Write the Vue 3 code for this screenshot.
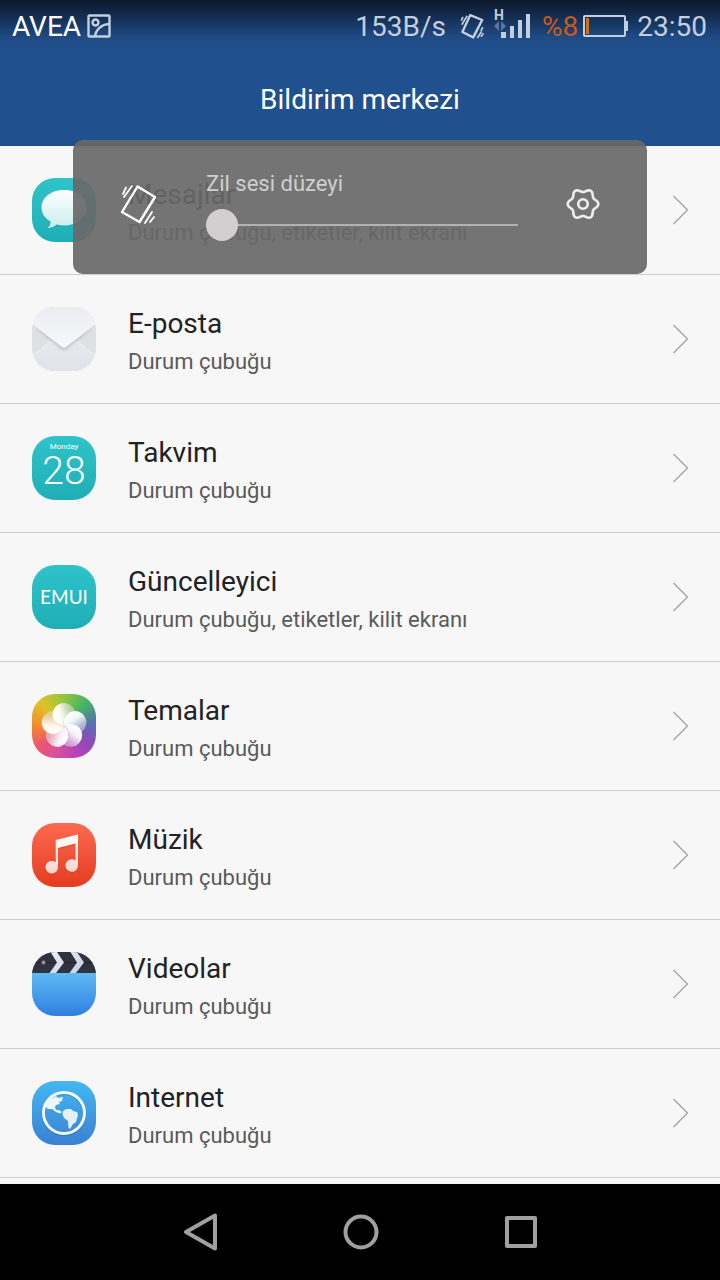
<script setup>
import { ref } from 'vue'

const level = ref(0)

const apps = [
  { id: 'messages', name: 'Mesajlar', detail: 'Durum çubuğu, etiketler, kilit ekranı' },
  { id: 'mail', name: 'E-posta', detail: 'Durum çubuğu' },
  { id: 'calendar', name: 'Takvim', detail: 'Durum çubuğu' },
  { id: 'updater', name: 'Güncelleyici', detail: 'Durum çubuğu, etiketler, kilit ekranı' },
  { id: 'themes', name: 'Temalar', detail: 'Durum çubuğu' },
  { id: 'music', name: 'Müzik', detail: 'Durum çubuğu' },
  { id: 'videos', name: 'Videolar', detail: 'Durum çubuğu' },
  { id: 'internet', name: 'Internet', detail: 'Durum çubuğu' },
]

// Six-lobed outline of the settings gear
const gearPoints = Array.from({ length: 120 }, (_, i) => {
  const a = (i / 120) * Math.PI * 2
  const r = 13.6 + 1.7 * Math.cos(6 * a)
  return `${(r * Math.cos(a)).toFixed(2)},${(r * Math.sin(a)).toFixed(2)}`
}).join(' ')
</script>

<template>
  <div class="screen">
    <header class="top">
      <div class="status">
        <span class="carrier">AVEA</span>
        <svg class="picture" width="24" height="24" viewBox="0 0 24 24" fill="none" stroke="#c3cede" stroke-width="2.4">
          <rect x="1.5" y="1.5" width="21" height="21" rx="1" />
          <circle cx="8.5" cy="8.5" r="3" />
          <path d="M8 22C9 16 14 10.500 22 10" />
        </svg>
        <span class="speed">153B/s</span>
        <svg class="ring" width="24" height="28" viewBox="0 0 40 44" fill="none" stroke="#c3cede" stroke-width="4">
          <path d="M17 4L37 12L22 41L4 32Z" stroke-linejoin="round" />
          <path d="M2 13L5 7M3 20L12 5M36 31L29 42M39 34L35 40M38 24L35 30" stroke-width="2.800" />
        </svg>
        <svg class="signal" width="38" height="40" viewBox="0 -4 38 40">
          <text x="0" y="10" class="network">H</text>
          <path d="M0 16L5 11V21ZM7 11L12 16L7 21Z" fill="#5a769f" />
          <path d="M7 22h5v6h-5zM16 16h4v12h-4zM24 10h4v18h-4zM32 4h4v24h-4z" fill="#c3cede" />
        </svg>
        <span class="percent">%8</span>
        <svg class="battery" width="46" height="24" viewBox="0 0 46 24">
          <rect x="1" y="2" width="41" height="20" rx="1" fill="none" stroke="#c3cede" stroke-width="2" />
          <rect x="43" y="7" width="2" height="10" fill="#c3cede" />
          <rect x="3" y="4" width="3" height="16" fill="#c8741a" />
        </svg>
        <span class="clock">23:50</span>
      </div>
      <h1>Bildirim merkezi</h1>
    </header>

    <main>
      <ul>
        <li v-for="app in apps" :key="app.id">
          <a href="#" class="row">
            <svg class="icon" :class="app.id" viewBox="0 0 64 64" aria-hidden="true">
              <g v-if="app.id === 'messages'">
                <defs>
                  <linearGradient id="bubble" x1="0" y1="0" x2="0" y2="1">
                    <stop offset="0" stop-color="#fff" /><stop offset="1" stop-color="#c9edee" />
                  </linearGradient>
                </defs>
                <path d="M32 13C45 13 55 20 55 30C55 41 44 48.500 32 48.500Q28 48.500 25 47.600Q20 51.500 15.500 51Q19 48 18.500 44.500C13 41.500 9.500 36.500 9.500 30C9.500 20 19 13 32 13Z" fill="#159ba2" opacity=".35" />
                <path d="M32 12C45 12 55 19.500 55 29.500C55 40 44 47.500 32 47.500Q28 47.500 25 46.600Q20 50.500 15.500 50Q19 47 18.500 43.500C13 40.500 9.500 35.500 9.500 29.500C9.500 19.500 19 12 32 12Z" fill="url(#bubble)" />
              </g>
              <g v-else-if="app.id === 'mail'">
                <defs>
                  <linearGradient id="flap" x1="0" y1="0" x2="0" y2="1">
                    <stop offset="0" stop-color="#ebecf2" /><stop offset="1" stop-color="#f7f9fb" />
                  </linearGradient>
                  <linearGradient id="pocket" x1="0" y1="0" x2="0" y2="1">
                    <stop offset="0" stop-color="#e8e9ee" /><stop offset="1" stop-color="#e2e3ea" />
                  </linearGradient>
                  <filter id="flapShade" x="-20%" y="-20%" width="140%" height="150%"><feGaussianBlur stdDeviation="1.500" /></filter>
                </defs>
                <path d="M0 49L20 33H44L64 49V64H0Z" fill="url(#pocket)" />
                <path d="M0 49L20 33M44 33L64 49" stroke="#edf0f2" />
                <path d="M4 21L30 42.500Q32 44 34 42.500L60 21Z" fill="#aab4be" opacity=".7" filter="url(#flapShade)" />
                <path d="M0 0H64V17L34 40Q32 41.500 30 40L0 17Z" fill="url(#flap)" />
              </g>
              <g v-else-if="app.id === 'calendar'" fill="#fff" text-anchor="middle">
                <text x="32" y="13" class="weekday">Monday</text>
                <text x="32" y="48" class="date">28</text>
              </g>
              <g v-else-if="app.id === 'updater'">
                <text x="32" y="39" class="emui" text-anchor="middle">EMUI</text>
              </g>
              <g v-else-if="app.id === 'themes'" transform="translate(32 32)">
                <defs>
                  <linearGradient id="petal" x1="-9" y1="-6" x2="9" y2="-12" gradientUnits="userSpaceOnUse">
                    <stop offset="0" stop-color="#fff" />
                    <stop offset=".4" stop-color="#fff" stop-opacity=".92" />
                    <stop offset="1" stop-color="#e6dce6" stop-opacity=".55" />
                  </linearGradient>
                </defs>
                <path v-for="n in 5" :key="n" d="M0 0A11.500 11.500 0 1 1 10.940 -15.050A11.500 11.500 0 0 0 0 0Z" fill="url(#petal)" :transform="`rotate(${n * 72})`" />
              </g>
              <g v-else-if="app.id === 'music'">
                <defs>
                  <linearGradient id="note" x1="0" y1="11" x2="0" y2="51" gradientUnits="userSpaceOnUse">
                    <stop offset="0" stop-color="#fff" /><stop offset="1" stop-color="#fbd3cc" />
                  </linearGradient>
                </defs>
                <path d="M23.700 17L46 11.500V43A6.300 6.300 0 1 1 43.500 37.500V20.500L26 25V45A6.300 6.300 0 1 1 23.700 39.300Z" fill="#b92c14" opacity=".4" transform="translate(0 1)" />
                <path d="M23.700 17L46 11.500V43A6.300 6.300 0 1 1 43.500 37.500V20.500L26 25V45A6.300 6.300 0 1 1 23.700 39.300Z" fill="url(#note)" />
              </g>
              <g v-else-if="app.id === 'videos'">
                <defs>
                  <linearGradient id="stripe" x1="0" y1="0" x2="1" y2="1">
                    <stop offset="0" stop-color="#e9edf8" /><stop offset="1" stop-color="#c6cfe2" />
                  </linearGradient>
                </defs>
                <path d="M0 0H64V21H0Z" fill="#32323e" />
                <path d="M0 10.500H64" stroke="#24242e" />
                <path d="M18.500 0H25L32 10.500L24 21H17.500L25 10.500ZM38.500 0H45L52 10.500L44 21H37.500L45 10.500Z" fill="url(#stripe)" />
                <circle cx="11.500" cy="10.500" r="2" fill="#92929c" />
              </g>
              <g v-else>
                <circle cx="32" cy="33" r="20.500" fill="none" stroke="#1c5ca8" stroke-opacity=".35" stroke-width="3.500" />
                <circle cx="32" cy="32" r="20.500" fill="none" stroke="#f3f9fe" stroke-width="3" />
                <path d="M13 25L17 18L21 17L24 15L26 17L31 16L30 20L27 21L28 23L24 24L23 26L24 29L27 29L30 31L28 32.500L24 31L20 28L16 28Z" fill="#eef6fd" />
                <path d="M31 30L34 28H39L41 30L45 31L46 34L44 41L41 43L38 48L36.500 47L36 40L32 37L30.500 33Z" fill="#e6f0fb" />
              </g>
            </svg>
            <span class="text">
              <span class="name">{{ app.name }}</span>
              <span class="detail">{{ app.detail }}</span>
            </span>
            <svg class="chevron" width="16" height="30" viewBox="0 0 16 30" fill="none" stroke="#a6a6a6" stroke-width="1.400">
              <path d="M1.500 1L15.500 15L1.500 29" />
            </svg>
          </a>
        </li>
      </ul>
    </main>

    <section class="volume">
      <button type="button" aria-label="Titreşim">
        <svg width="40" height="44" viewBox="2 -1 40 44" fill="none" stroke="#fff" stroke-width="2.400">
          <path d="M19.500 3.500L37 14L21.500 39L4 29Z" stroke-linejoin="round" />
          <path d="M6 8.500L8 4.500M6 14L14 3M27 40L34 29M32 39L36 34M5 11L6 9" stroke-width="1.800" stroke-linecap="round" />
        </svg>
      </button>
      <div class="level">
        <label for="ring-level">Zil sesi düzeyi</label>
        <input id="ring-level" v-model="level" type="range" min="0" max="7">
      </div>
      <button type="button" aria-label="Ayarlar">
        <svg width="36" height="36" viewBox="-18 -18 36 36" fill="none" stroke="#ececec" stroke-width="2.600" stroke-linejoin="round">
          <polygon :points="gearPoints" />
          <circle r="4.800" />
        </svg>
      </button>
    </section>

    <nav>
      <button type="button" aria-label="Geri">
        <svg width="40" height="40" viewBox="0 0 40 40"><path d="M6 20L35 3.500V36.500Z" /></svg>
      </button>
      <button type="button" aria-label="Ana ekran">
        <svg width="40" height="40" viewBox="0 0 40 40"><circle cx="21" cy="20" r="15.500" /></svg>
      </button>
      <button type="button" aria-label="Son uygulamalar">
        <svg width="40" height="40" viewBox="0 0 40 40"><rect x="7" y="6" width="28" height="28" /></svg>
      </button>
    </nav>
  </div>
</template>

<style>
body {
  margin: 0;
  background: #f7f7f7;
}
</style>

<style scoped>
.screen {
  position: relative;
  display: flex;
  flex-direction: column;
  min-height: 100vh;
  background: #f7f7f7;
  font-family: Roboto, "Noto Sans", sans-serif;
}

.top {
  background: linear-gradient(#0b192d 0, #0f213c 8px, #1f4b85 38px, #20508e 54px);
  color: #fff;
}

.status {
  display: flex;
  align-items: center;
  height: 52px;
  padding: 0 13px 0 12px;
  font-size: 28px;
  color: #c3cede;
}

.carrier {
  color: #fff;
}

.picture {
  margin-left: 6px;
}

.speed {
  margin-left: auto;
}

.ring {
  margin-left: 14px;
}

.signal {
  margin: 0 10px;
}

.network {
  font-size: 14px;
  font-weight: 700;
  fill: #c3cede;
}

.percent {
  color: #c8591b;
}

.battery {
  margin: 0 8px 0 5px;
}

h1 {
  margin: 0;
  padding-top: 2px;
  font-size: 28px;
  font-weight: 400;
  line-height: 92px;
  text-align: center;
}

main {
  flex: 1;
}

ul {
  margin: 0;
  padding: 0;
  list-style: none;
}

.row {
  display: flex;
  align-items: center;
  height: 128px;
  padding: 0 32px;
  border-bottom: 1px solid #cdcdcd;
  color: #222;
  text-decoration: none;
}

.icon {
  width: 64px;
  height: 64px;
  border-radius: 23px;
}

.messages,
.calendar,
.updater {
  background: linear-gradient(#2ec4c9, #20aeb6);
}

.mail {
  background: #dde1e4;
}

.themes {
  background: conic-gradient(#8fc63f, #45b269 45deg, #5570b4 85deg, #9248b8 125deg, #b944b8 160deg, #d8509c 195deg, #ea5573 230deg, #f38a2c 270deg, #dfc226 315deg, #8fc63f);
}

.music {
  background: linear-gradient(#fd6a4e, #e33c22);
}

.videos {
  background: linear-gradient(#5fbcf6 30%, #317fe0);
}

.internet {
  background: linear-gradient(#42b8f2, #3b80d2);
}

.weekday {
  font-size: 8px;
}

.date {
  font-size: 39px;
  font-weight: 300;
}

.emui {
  font-family: Lato, sans-serif;
  font-size: 19px;
  fill: #fff;
}

.text {
  display: flex;
  flex: 1;
  flex-direction: column;
  padding: 7px 0 0 32px;
}

.name {
  font-size: 28px;
  line-height: 38px;
}

.detail {
  font-size: 22px;
  line-height: 38px;
  color: #5a5a5a;
}

button {
  display: flex;
  align-items: center;
  justify-content: center;
  margin: 0;
  padding: 0;
  border: 0;
  background: none;
}

.volume {
  position: absolute;
  top: 140px;
  right: 73px;
  left: 73px;
  display: grid;
  grid-template-columns: 133px 1fr 129px;
  align-items: center;
  box-sizing: border-box;
  height: 134px;
  padding-bottom: 6px;
  border-radius: 10px;
  background: rgba(104, 104, 104, 0.92);
}

.level {
  display: flex;
  flex-direction: column;
  gap: 8px;
}

label {
  font-size: 22px;
  line-height: 34px;
  color: #cfcfcf;
}

input {
  width: 100%;
  height: 32px;
  margin: 0;
  appearance: none;
  background: linear-gradient(#b2b2b2, #b2b2b2) center / 100% 2px no-repeat;
}

input::-webkit-slider-thumb {
  width: 32px;
  height: 32px;
  appearance: none;
  border-radius: 50%;
  background: #d1cfd0;
}

nav {
  display: flex;
  justify-content: center;
  height: 96px;
  background: #000;
}

nav button {
  width: 160px;
}

nav svg {
  fill: none;
  stroke: #a0a0a0;
  stroke-width: 4;
  stroke-linejoin: round;
}
</style>
